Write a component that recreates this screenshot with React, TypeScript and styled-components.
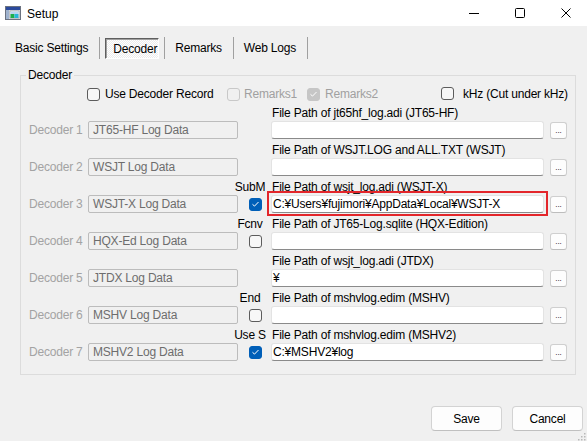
import React from "react";
import styled, { createGlobalStyle, css } from "styled-components";

const Global = createGlobalStyle`
  html, body { margin: 0; padding: 0; background: #f0f0f0; }
  body { font-family: "Liberation Sans", Arial, sans-serif; font-size: 12px; color: #000; }
  * { box-sizing: border-box; }
`;

const Window = styled.div`
  position: relative;
  width: 587px;
  height: 441px;
  background: #f0f0f0;
  overflow: hidden;
  letter-spacing: -0.2px;
`;

const TitleBar = styled.div`
  height: 26px;
  background: #ffffff;
  display: flex;
  align-items: center;
  padding-left: 5px;
`;

const Title = styled.span`
  margin-left: 6px;
  font-size: 12px;
  letter-spacing: 0;
  flex: 1;
  padding-top: 1px;
`;

const Controls = styled.div`
  display: flex;
  height: 26px;
  margin-right: -2px;
`;

const ControlButton = styled.div`
  width: 46px;
  height: 26px;
  display: flex;
  align-items: center;
  justify-content: center;
`;

const Body = styled.div`
  padding-top: 11px;
`;

const TabStrip = styled.div`
  display: flex;
  align-items: center;
  height: 22px;
  padding-left: 5px;
`;

const Tab = styled.div<{ $active?: boolean }>`
  height: 22px;
  display: flex;
  align-items: center;
  padding: 0 11px 0 10px;
  white-space: nowrap;
  ${(p) =>
    p.$active &&
    css`
      height: 21px;
      width: 54px;
      margin: 1px 5px 0 5px;
      padding: 1px 0 0 7px;
      border: 1px solid;
      border-color: #5f5f5f #ffffff #ffffff #5f5f5f;
      box-shadow: inset 1px 1px 0 #a0a0a0;
      background: repeating-conic-gradient(#ffffff 0 25%, #ececec 0 50%) 0 0 / 2px 2px;
    `}
`;

const TabSep = styled.div`
  width: 1px;
  height: 22px;
  background: #a0a0a0;
`;

const Group = styled.div`
  position: relative;
  margin: 16px 11px 0 20px;
  border: 1px solid #dcdcdc;
  padding: 10px 0 13px 8px;
`;

const Legend = styled.span`
  position: absolute;
  top: -8px;
  left: 5px;
  line-height: 14px;
  padding: 0 2px;
  background: #f0f0f0;
`;

const OptionsRow = styled.div`
  display: grid;
  grid-template-columns: 140px 80px 134px auto;
  height: 16px;
  padding-left: 58px;
  align-items: center;
`;

const Option = styled.label<{ $gap: number; $disabled?: boolean }>`
  display: flex;
  align-items: center;
  gap: ${(p) => p.$gap}px;
  white-space: nowrap;
  color: ${(p) => (p.$disabled ? "#a0a0a0" : "#000")};
`;

const BoxWrap = styled.span<{ $checked?: boolean; $disabled?: boolean; $nudge?: number }>`
  width: 13px;
  height: 13px;
  border-radius: 3px;
  display: inline-flex;
  align-items: center;
  justify-content: center;
  flex: none;
  margin-top: ${(p) => p.$nudge ?? 0}px;
  ${(p) =>
    p.$checked
      ? css`
          background: ${p.$disabled ? "#c6c6c6" : "#005fb8"};
          border: 1px solid ${p.$disabled ? "#c6c6c6" : "#005fb8"};
        `
      : css`
          background: ${p.$disabled ? "#f0f0f0" : "#f7f7f7"};
          border: 1px solid ${p.$disabled ? "#c8c8c8" : "#5c5c5c"};
        `}
`;

const CheckBox: React.FC<{ checked?: boolean; disabled?: boolean; nudge?: number }> = ({
  checked,
  disabled,
  nudge,
}) => (
  <BoxWrap $checked={checked} $disabled={disabled} $nudge={nudge}>
    {checked && (
      <svg width="9" height="8" viewBox="0 0 9 8">
        <path d="M1.5 4.3 L3.5 6.1 L7.5 2" fill="none" stroke="#fff" strokeWidth="1" />
      </svg>
    )}
  </BoxWrap>
);

const DecoderRow = styled.div`
  display: grid;
  grid-template-columns: 59px 150px 33px 273px 23px;
  grid-template-rows: 16px 18px;
  margin-top: 3px;
`;

const SideLabel = styled.div`
  grid-column: 3;
  grid-row: 1;
  display: flex;
  justify-content: center;
  align-items: center;
  padding-right: 9px;
  white-space: nowrap;
`;

const PathLabel = styled.div`
  grid-column: 4 / span 2;
  grid-row: 1;
  display: flex;
  align-items: center;
  padding-left: 1px;
  white-space: nowrap;
`;

const DecoderName = styled.div`
  grid-column: 1;
  grid-row: 2;
  display: flex;
  align-items: center;
  color: #a3a3a3;
  white-space: nowrap;
`;

const NameBox = styled.div`
  grid-column: 2;
  grid-row: 2;
  border: 1px solid #bcbcbc;
  border-radius: 2px;
  color: #6d6d6d;
  display: flex;
  align-items: center;
  padding-left: 4px;
  white-space: nowrap;
`;

const CheckCell = styled.div`
  grid-column: 3;
  grid-row: 2;
  display: flex;
  align-items: center;
  padding-left: 11px;
`;

const PathInput = styled.div<{ $marked?: boolean }>`
  position: relative;
  grid-column: 4;
  grid-row: 2;
  background: #ffffff;
  border: 1px solid #e3e3e3;
  border-bottom-color: #8a8a8a;
  border-radius: 3px;
  display: flex;
  align-items: center;
  padding-left: 1px;
  white-space: nowrap;
  ${(p) =>
    p.$marked &&
    css`
      &::after {
        content: "";
        position: absolute;
        left: -5px;
        right: -5px;
        top: -5px;
        bottom: -4px;
        border: 2px solid #e3262b;
        pointer-events: none;
      }
    `}
`;

const BrowseButton = styled.div`
  grid-column: 5;
  grid-row: 2;
  justify-self: end;
  align-self: center;
  width: 17px;
  height: 17px;
  border: 1px solid #cfcfcf;
  border-bottom-color: #bdbdbd;
  border-radius: 3px;
  background: #fdfdfd;
  font-size: 8px;
  letter-spacing: 0;
  line-height: 8px;
  display: flex;
  align-items: flex-end;
  justify-content: center;
  padding-bottom: 3px;
`;

const ButtonRow = styled.div`
  display: flex;
  justify-content: flex-end;
  gap: 10px;
  margin-top: 31px;
  padding-right: 4px;
`;

const Button = styled.div`
  width: 71px;
  height: 25px;
  border: 1px solid #d3d3d3;
  border-bottom-color: #c0c0c0;
  border-radius: 4px;
  background: #fdfdfd;
  display: flex;
  align-items: center;
  justify-content: center;
`;

const Grip = styled.div`
  position: absolute;
  right: 1px;
  bottom: 1px;
  width: 10px;
  height: 10px;
`;

type Row = {
  name: string;
  data: string;
  label: string;
  path: string;
  side?: string;
  check?: boolean | null;
  marked?: boolean;
};

const rows: Row[] = [
  { name: "Decoder 1", data: "JT65-HF Log Data", label: "File Path of jt65hf_log.adi (JT65-HF)", path: "" },
  { name: "Decoder 2", data: "WSJT Log Data", label: "File Path of WSJT.LOG and ALL.TXT (WSJT)", path: "" },
  {
    name: "Decoder 3",
    data: "WSJT-X Log Data",
    label: "File Path of wsjt_log.adi (WSJT-X)",
    path: "C:¥Users¥fujimori¥AppData¥Local¥WSJT-X",
    side: "SubM",
    check: true,
    marked: true,
  },
  {
    name: "Decoder 4",
    data: "HQX-Ed Log Data",
    label: "File Path of JT65-Log.sqlite (HQX-Edition)",
    path: "",
    side: "Fcnv",
    check: false,
  },
  { name: "Decoder 5", data: "JTDX Log Data", label: "File Path of wsjt_log.adi (JTDX)", path: "¥" },
  {
    name: "Decoder 6",
    data: "MSHV Log Data",
    label: "File Path of mshvlog.edim (MSHV)",
    path: "",
    side: "End",
    check: false,
  },
  {
    name: "Decoder 7",
    data: "MSHV2 Log Data",
    label: "File Path of mshvlog.edim (MSHV2)",
    path: "C:¥MSHV2¥log",
    side: "Use S",
    check: true,
  },
];

const AppIcon = () => (
  <svg width="16" height="16" viewBox="0 0 16 16">
    <rect x="0.5" y="1.5" width="15" height="13" fill="#d9dde3" stroke="#6b7280" />
    <rect x="1" y="2" width="14" height="3" fill="#2b4a9c" />
    <rect x="1" y="5" width="3" height="9" fill="#9fb3cf" />
    <rect x="5" y="6" width="9" height="7" fill="#ffffff" stroke="#8a8a8a" strokeWidth="0.6" />
    <rect x="5.5" y="9" width="4" height="4" fill="#1fae4b" />
    <rect x="9.5" y="9" width="4" height="4" fill="#27b5d8" />
    <rect x="5.5" y="6.5" width="8" height="2.5" fill="#b9d5f0" />
  </svg>
);

export default function App() {
  return (
    <>
      <Global />
      <Window>
        <TitleBar>
          <AppIcon />
          <Title>Setup</Title>
          <Controls>
            <ControlButton>
              <svg width="10" height="10" viewBox="0 0 10 10">
                <line x1="0" y1="5.5" x2="10" y2="5.5" stroke="#000" strokeWidth="1" />
              </svg>
            </ControlButton>
            <ControlButton>
              <svg width="10" height="10" viewBox="0 0 10 10">
                <rect x="0.5" y="0.5" width="9" height="9" rx="1" fill="none" stroke="#000" strokeWidth="1" />
              </svg>
            </ControlButton>
            <ControlButton>
              <svg width="10" height="10" viewBox="0 0 10 10">
                <path d="M0.5 0.5 L9.5 9.5 M9.5 0.5 L0.5 9.5" stroke="#000" strokeWidth="1" />
              </svg>
            </ControlButton>
          </Controls>
        </TitleBar>
        <Body>
          <TabStrip>
            <Tab>Basic Settings</Tab>
            <TabSep />
            <Tab $active>Decoder</Tab>
            <TabSep />
            <Tab>Remarks</Tab>
            <TabSep />
            <Tab>Web Logs</Tab>
            <TabSep />
          </TabStrip>
          <Group>
            <Legend>Decoder</Legend>
            <OptionsRow>
              <Option $gap={5}>
                <CheckBox />
                Use Decoder Record
              </Option>
              <Option $gap={4} $disabled>
                <CheckBox disabled />
                Remarks1
              </Option>
              <Option $gap={5} $disabled>
                <CheckBox disabled checked />
                Remarks2
              </Option>
              <Option $gap={9}>
                <CheckBox nudge={-2} />
                kHz (Cut under kHz)
              </Option>
            </OptionsRow>
            {rows.map((r) => (
              <DecoderRow key={r.name}>
                {r.side && <SideLabel>{r.side}</SideLabel>}
                <PathLabel>{r.label}</PathLabel>
                <DecoderName>{r.name}</DecoderName>
                <NameBox>{r.data}</NameBox>
                {r.check != null && (
                  <CheckCell>
                    <CheckBox checked={r.check} />
                  </CheckCell>
                )}
                <PathInput $marked={r.marked}>{r.path}</PathInput>
                <BrowseButton>...</BrowseButton>
              </DecoderRow>
            ))}
          </Group>
          <ButtonRow>
            <Button>Save</Button>
            <Button>Cancel</Button>
          </ButtonRow>
        </Body>
        <Grip>
          <svg width="10" height="10" viewBox="0 0 10 10">
            {[
              [8, 2],
              [8, 5],
              [5, 5],
              [8, 8],
              [5, 8],
              [2, 8],
            ].map(([x, y]) => (
              <rect key={`${x}-${y}`} x={x} y={y} width="1.5" height="1.5" fill="#b8b8b8" />
            ))}
          </svg>
        </Grip>
      </Window>
    </>
  );
}
